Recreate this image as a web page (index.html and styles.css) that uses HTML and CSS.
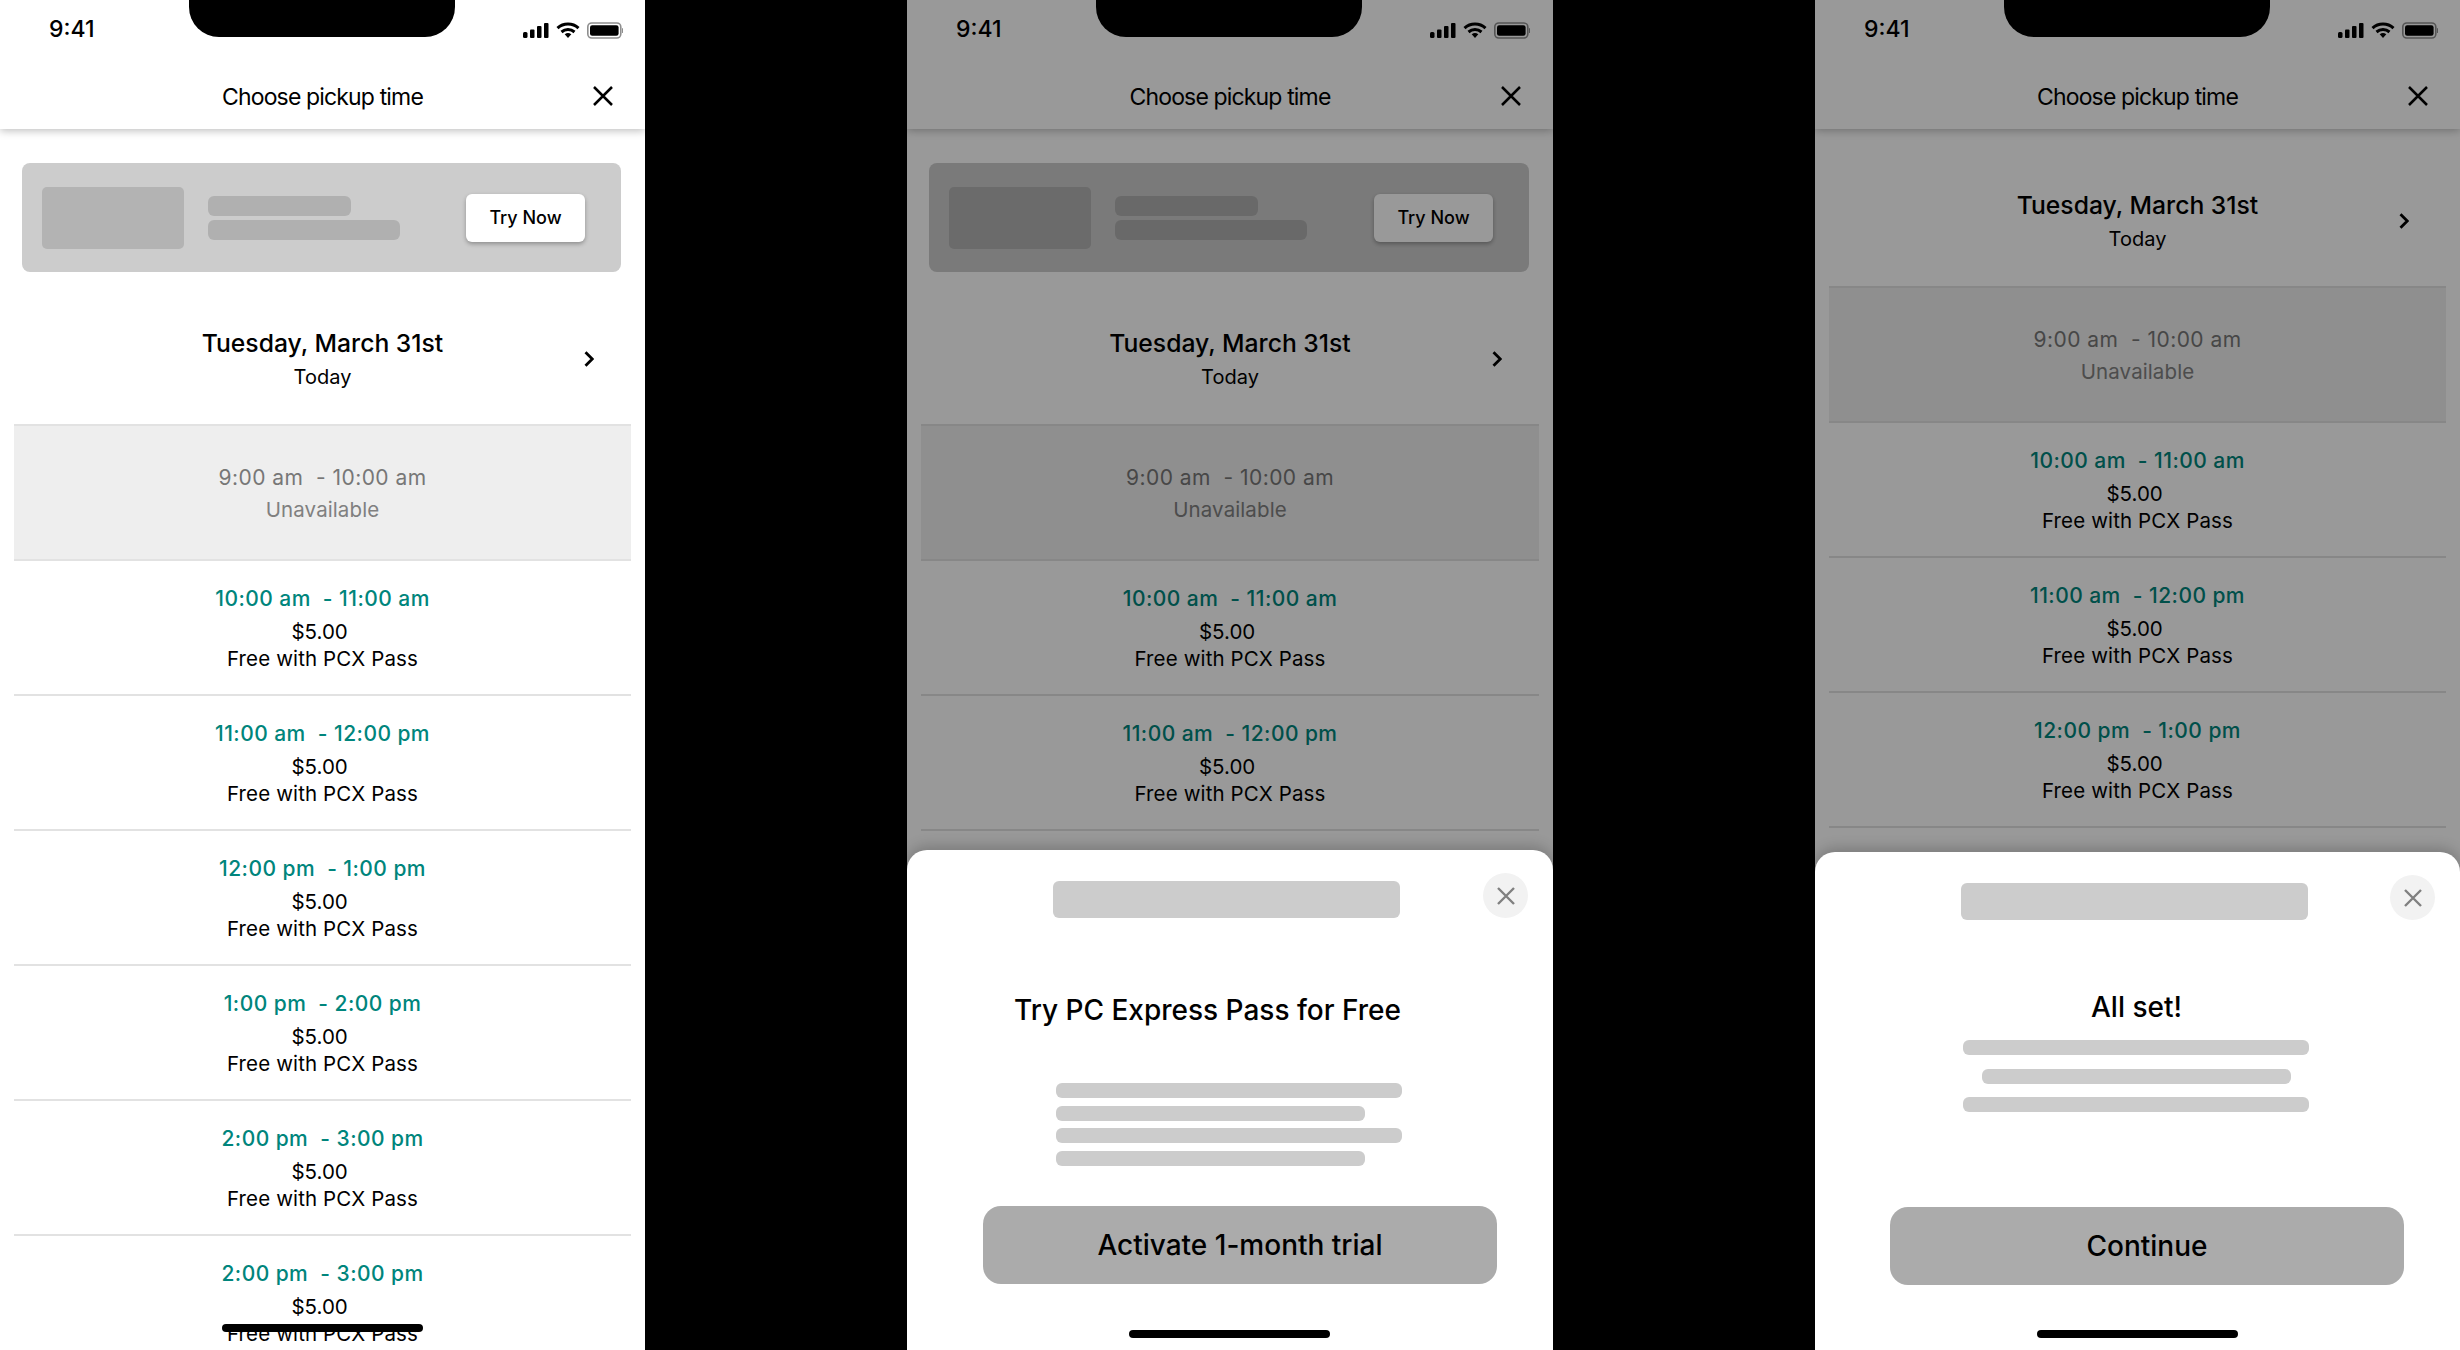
FILE: index.html
```html
<!DOCTYPE html>
<html lang="en">
<head>
    <meta charset="UTF-8">
    <title>Choose pickup time</title>
    <link rel="stylesheet" href="styles.css">
</head>
<body>
    <div class="board">

        <!-- screen 1: list with promo banner -->
        <section class="phone">
            <header class="top">
                <div class="status">
                    <span class="clock">9:41</span>
                    <span class="notch"></span>
                    <svg class="status-icons" width="100" height="17" viewBox="0 0 100 17">
                        <rect x="0" y="10" width="4.5" height="6" rx="1.5"/>
                        <rect x="7" y="7.5" width="4.5" height="8.5" rx="1"/>
                        <rect x="14" y="4" width="4.5" height="12" rx="1"/>
                        <rect x="21" y="1" width="4.5" height="15" rx="1"/>
                        <path d="M34.5 6.2a15.5 15.5 0 0 1 21 0" class="wifi"/>
                        <path d="M38.5 10a10 10 0 0 1 13 0" class="wifi"/>
                        <path d="M41.7 12.3l3.3 3.7 3.3-3.7a5.2 5.2 0 0 0-6.6 0z"/>
                        <rect x="64.8" y="1" width="33" height="15" rx="4" class="batt"/>
                        <rect x="67" y="3.2" width="28.6" height="10.6" rx="2.2"/>
                        <rect x="99" y="6" width="1" height="5" rx="0.5" class="nub"/>
                    </svg>
                </div>
                <div class="title-bar">
                    <h1 class="title">Choose pickup time</h1>
                    <svg class="title-close" width="20" height="20" viewBox="0 0 20 20"><path d="M1 1l18 18M19 1L1 19"/></svg>
                </div>
            </header>
            <div class="banner">
                <div class="banner-img"></div>
                <div class="banner-lines">
                    <div class="banner-line short"></div>
                    <div class="banner-line"></div>
                </div>
                <button class="try-btn">Try Now</button>
            </div>
            <div class="date-row">
                <span></span>
                <div class="date-text">
                    <div class="date-main">Tuesday, March 31st</div>
                    <div class="date-sub">Today</div>
                </div>
                <svg class="chevron" width="10" height="16" viewBox="0 0 10 16"><path d="M1.500 1.200L8.300 8l-6.800 6.800"/></svg>
            </div>
            <div class="slot off">
                <div class="slot-time">9:00 am  - 10:00 am</div>
                <div class="slot-note">Unavailable</div>
            </div>
            <div class="slot">
                <div class="slot-time">10:00 am  - 11:00 am</div>
                <div class="slot-price">$5.00 </div>
                <div class="slot-free">Free with PCX Pass</div>
            </div>
            <div class="slot">
                <div class="slot-time">11:00 am  - 12:00 pm</div>
                <div class="slot-price">$5.00 </div>
                <div class="slot-free">Free with PCX Pass</div>
            </div>
            <div class="slot">
                <div class="slot-time">12:00 pm  - 1:00 pm</div>
                <div class="slot-price">$5.00 </div>
                <div class="slot-free">Free with PCX Pass</div>
            </div>
            <div class="slot">
                <div class="slot-time">1:00 pm  - 2:00 pm</div>
                <div class="slot-price">$5.00 </div>
                <div class="slot-free">Free with PCX Pass</div>
            </div>
            <div class="slot">
                <div class="slot-time">2:00 pm  - 3:00 pm</div>
                <div class="slot-price">$5.00 </div>
                <div class="slot-free">Free with PCX Pass</div>
            </div>
            <div class="slot">
                <div class="slot-time">2:00 pm  - 3:00 pm</div>
                <div class="slot-price">$5.00 </div>
                <div class="slot-free">Free with PCX Pass</div>
            </div>
            <div class="home-bar list-home"></div>
        </section>

        <!-- screen 2: trial offer sheet -->
        <section class="phone">
            <header class="top">
                <div class="status">
                    <span class="clock">9:41</span>
                    <span class="notch"></span>
                    <svg class="status-icons" width="100" height="17" viewBox="0 0 100 17">
                        <rect x="0" y="10" width="4.5" height="6" rx="1.5"/>
                        <rect x="7" y="7.5" width="4.5" height="8.5" rx="1"/>
                        <rect x="14" y="4" width="4.5" height="12" rx="1"/>
                        <rect x="21" y="1" width="4.5" height="15" rx="1"/>
                        <path d="M34.5 6.2a15.5 15.5 0 0 1 21 0" class="wifi"/>
                        <path d="M38.5 10a10 10 0 0 1 13 0" class="wifi"/>
                        <path d="M41.7 12.3l3.3 3.7 3.3-3.7a5.2 5.2 0 0 0-6.6 0z"/>
                        <rect x="64.8" y="1" width="33" height="15" rx="4" class="batt"/>
                        <rect x="67" y="3.2" width="28.6" height="10.6" rx="2.2"/>
                        <rect x="99" y="6" width="1" height="5" rx="0.5" class="nub"/>
                    </svg>
                </div>
                <div class="title-bar">
                    <h1 class="title">Choose pickup time</h1>
                    <svg class="title-close" width="20" height="20" viewBox="0 0 20 20"><path d="M1 1l18 18M19 1L1 19"/></svg>
                </div>
            </header>
            <div class="banner">
                <div class="banner-img"></div>
                <div class="banner-lines">
                    <div class="banner-line short"></div>
                    <div class="banner-line"></div>
                </div>
                <button class="try-btn">Try Now</button>
            </div>
            <div class="date-row">
                <span></span>
                <div class="date-text">
                    <div class="date-main">Tuesday, March 31st</div>
                    <div class="date-sub">Today</div>
                </div>
                <svg class="chevron" width="10" height="16" viewBox="0 0 10 16"><path d="M1.500 1.200L8.300 8l-6.800 6.800"/></svg>
            </div>
            <div class="slot off">
                <div class="slot-time">9:00 am  - 10:00 am</div>
                <div class="slot-note">Unavailable</div>
            </div>
            <div class="slot">
                <div class="slot-time">10:00 am  - 11:00 am</div>
                <div class="slot-price">$5.00 </div>
                <div class="slot-free">Free with PCX Pass</div>
            </div>
            <div class="slot">
                <div class="slot-time">11:00 am  - 12:00 pm</div>
                <div class="slot-price">$5.00 </div>
                <div class="slot-free">Free with PCX Pass</div>
            </div>

            <div class="dim"></div>
            <div class="sheet offer">
                <div class="sheet-head">
                    <div class="sheet-ph"></div>
                    <div class="sheet-close"><svg width="18" height="18" viewBox="0 0 18 18"><path d="M1 1l16 16M17 1L1 17"/></svg></div>
                </div>
                <h2 class="sheet-title">Try PC Express Pass for Free</h2>
                <div class="sheet-lines">
                    <div class="sheet-line"></div>
                    <div class="sheet-line short"></div>
                    <div class="sheet-line"></div>
                    <div class="sheet-line short"></div>
                </div>
                <button class="sheet-btn">Activate 1-month trial</button>
                <div class="home-bar"></div>
            </div>
        </section>

        <!-- screen 3: confirmation sheet, no banner -->
        <section class="phone">
            <header class="top">
                <div class="status">
                    <span class="clock">9:41</span>
                    <span class="notch"></span>
                    <svg class="status-icons" width="100" height="17" viewBox="0 0 100 17">
                        <rect x="0" y="10" width="4.5" height="6" rx="1.5"/>
                        <rect x="7" y="7.5" width="4.5" height="8.5" rx="1"/>
                        <rect x="14" y="4" width="4.5" height="12" rx="1"/>
                        <rect x="21" y="1" width="4.5" height="15" rx="1"/>
                        <path d="M34.5 6.2a15.5 15.5 0 0 1 21 0" class="wifi"/>
                        <path d="M38.5 10a10 10 0 0 1 13 0" class="wifi"/>
                        <path d="M41.7 12.3l3.3 3.7 3.3-3.7a5.2 5.2 0 0 0-6.6 0z"/>
                        <rect x="64.8" y="1" width="33" height="15" rx="4" class="batt"/>
                        <rect x="67" y="3.2" width="28.6" height="10.6" rx="2.2"/>
                        <rect x="99" y="6" width="1" height="5" rx="0.5" class="nub"/>
                    </svg>
                </div>
                <div class="title-bar">
                    <h1 class="title">Choose pickup time</h1>
                    <svg class="title-close" width="20" height="20" viewBox="0 0 20 20"><path d="M1 1l18 18M19 1L1 19"/></svg>
                </div>
            </header>
            <div class="date-row plain">
                <span></span>
                <div class="date-text">
                    <div class="date-main">Tuesday, March 31st</div>
                    <div class="date-sub">Today</div>
                </div>
                <svg class="chevron" width="10" height="16" viewBox="0 0 10 16"><path d="M1.500 1.200L8.300 8l-6.800 6.800"/></svg>
            </div>
            <div class="slot off">
                <div class="slot-time">9:00 am  - 10:00 am</div>
                <div class="slot-note">Unavailable</div>
            </div>
            <div class="slot">
                <div class="slot-time">10:00 am  - 11:00 am</div>
                <div class="slot-price">$5.00 </div>
                <div class="slot-free">Free with PCX Pass</div>
            </div>
            <div class="slot">
                <div class="slot-time">11:00 am  - 12:00 pm</div>
                <div class="slot-price">$5.00 </div>
                <div class="slot-free">Free with PCX Pass</div>
            </div>
            <div class="slot">
                <div class="slot-time">12:00 pm  - 1:00 pm</div>
                <div class="slot-price">$5.00 </div>
                <div class="slot-free">Free with PCX Pass</div>
            </div>

            <div class="dim"></div>
            <div class="sheet done">
                <div class="sheet-head">
                    <div class="sheet-ph"></div>
                    <div class="sheet-close"><svg width="18" height="18" viewBox="0 0 18 18"><path d="M1 1l16 16M17 1L1 17"/></svg></div>
                </div>
                <h2 class="sheet-title">All set!</h2>
                <div class="sheet-lines">
                    <div class="sheet-line"></div>
                    <div class="sheet-line short"></div>
                    <div class="sheet-line"></div>
                </div>
                <button class="sheet-btn">Continue</button>
                <div class="home-bar"></div>
            </div>
        </section>

    </div>
</body>
</html>
```

FILE: styles.css
```css
* {
    box-sizing: border-box;
}
body {
    margin: 0;
    background-color: #000;
    font-family: Inter, "Liberation Sans", sans-serif;
    color: #000;
}
.board {
    display: grid;
    grid-template-columns: 645px 646px 645px;
    column-gap: 262px;
    height: 1350px;
    overflow: hidden;
}
.phone {
    position: relative;
    height: 1350px;
    overflow: hidden;
    background-color: #fff;
}

/* status bar and title */
.top {
    height: 129px;
    background-color: #fff;
    box-shadow: 0 2px 8px rgba(0, 0, 0, 0.25);
}
.status {
    display: flex;
    align-items: flex-start;
    height: 65px;
    padding: 0 22px 0 49px;
}
.clock {
    width: 140px;
    margin-top: 16px;
    font-size: 23px;
    line-height: 26px;
    font-weight: 500;
}
.notch {
    width: 266px;
    height: 37px;
    background-color: #000;
    border-radius: 0 0 30px 30px;
}
.status-icons {
    margin: 22px 0 0 68px;
    flex: none;
}
.wifi {
    fill: none;
    stroke: #000;
    stroke-width: 3;
}
.batt {
    fill: none;
    stroke: #8e8e8e;
    stroke-width: 1.600;
}
.nub {
    fill: #8e8e8e;
}
.title-bar {
    display: grid;
    grid-template-columns: 1fr auto 1fr;
    align-items: center;
    height: 64px;
}
.title {
    grid-column: 2;
    margin: 0;
    font-size: 23px;
    font-weight: 400;
    letter-spacing: -0.85px;
}
.title-close {
    justify-self: end;
    margin: 0 32px 2px 0;
    fill: none;
    stroke: #000;
    stroke-width: 2.500;
}

/* promo banner */
.banner {
    display: flex;
    align-items: center;
    height: 109px;
    margin: 34px 24px 0 22px;
    padding: 0 36px 0 20px;
    background-color: #ccc;
    border-radius: 8px;
}
.banner-img {
    width: 142px;
    height: 62px;
    background-color: #b3b3b3;
    border-radius: 5px;
}
.banner-lines {
    display: flex;
    flex-direction: column;
    gap: 4px;
    width: 192px;
    margin-left: 24px;
}
.banner-line {
    height: 20px;
    background-color: #b0b0b0;
    border-radius: 6px;
}
.banner-line.short {
    width: 143px;
}
.try-btn {
    width: 119px;
    height: 48px;
    margin-left: auto;
    background-color: #fff;
    border: none;
    border-radius: 6px;
    box-shadow: 0 2px 4px rgba(0, 0, 0, 0.3);
    font-family: inherit;
    font-size: 18px;
    font-weight: 500;
    color: #000;
}

/* date picker row */
.date-row {
    display: grid;
    grid-template-columns: 1fr auto 1fr;
    align-items: center;
    height: 152px;
    padding-top: 24px;
    text-align: center;
}
.date-row.plain {
    height: 157px;
    padding-top: 28px;
}
.date-text {
    grid-column: 2;
}
.date-main {
    font-size: 24.700px;
    line-height: 30px;
    font-weight: 500;
}
.date-sub {
    margin-top: 4px;
    font-size: 20px;
    line-height: 30px;
}
.chevron {
    justify-self: end;
    margin: 0 51px 2px 0;
    fill: none;
    stroke: #000;
    stroke-width: 2.800;
}

/* time slots */
.slot {
    height: 135px;
    margin: 0 14px;
    padding-top: 24px;
    border-bottom: 2px solid #e2e2e2;
    text-align: center;
}
.slot.off {
    height: 137px;
    padding-top: 38px;
    background-color: #eee;
    border-top: 2px solid #e2e2e2;
}
.slot-time {
    font-size: 21px;
    line-height: 28px;
    font-weight: 500;
    letter-spacing: 0.45px;
    color: #00857c;
    white-space: pre;
}
.slot.off .slot-time {
    font-weight: 400;
    color: #777;
}
.slot-note {
    margin-top: 4px;
    font-size: 20.500px;
    line-height: 28px;
    letter-spacing: 0.1px;
    color: #808080;
}
.slot-price {
    margin-top: 5px;
    font-size: 20.500px;
    line-height: 27px;
    white-space: pre;
}
.slot-free {
    font-size: 20.500px;
    line-height: 27px;
    letter-spacing: 0.12px;
}

/* modal sheets */
.dim {
    position: absolute;
    inset: 0;
    z-index: 1;
    background-color: rgba(0, 0, 0, 0.4);
}
.sheet {
    position: absolute;
    left: 0;
    right: 0;
    bottom: 0;
    z-index: 2;
    display: flex;
    flex-direction: column;
    background-color: #fff;
    border-radius: 20px 20px 0 0;
    box-shadow: 0 -4px 14px rgba(0, 0, 0, 0.2);
}
.sheet.offer {
    height: 500px;
}
.sheet.done {
    height: 498px;
}
.sheet-head {
    display: flex;
    align-items: flex-end;
    padding: 23px 25px 0 146px;
}
.sheet-ph {
    width: 347px;
    height: 37px;
    background-color: #ccc;
    border-radius: 6px;
}
.sheet-close {
    display: flex;
    align-items: center;
    justify-content: center;
    width: 45px;
    height: 45px;
    margin-left: auto;
    background-color: #f2f2f2;
    border-radius: 50%;
}
.sheet-close svg {
    fill: none;
    stroke: #808080;
    stroke-width: 2.400;
}
.sheet-title {
    margin: 72px 0 0;
    padding-right: 45px;
    font-size: 28px;
    line-height: 40px;
    font-weight: 500;
    text-align: center;
}
.done .sheet-title {
    margin-top: 67px;
    padding-right: 2px;
}
.sheet-lines {
    display: flex;
    flex-direction: column;
    gap: 7.700px;
    width: 346px;
    margin: 53px 0 0 149px;
}
.done .sheet-lines {
    align-items: center;
    gap: 13.500px;
    margin: 13px 0 0 148px;
}
.sheet-line {
    width: 100%;
    height: 15px;
    background-color: #ccc;
    border-radius: 6px;
}
.sheet-line.short {
    width: 309px;
}
.sheet-btn {
    width: 514px;
    height: 78px;
    margin: auto 0 66px 76px;
    background-color: #ababab;
    border: none;
    border-radius: 18px;
    font-family: inherit;
    font-size: 28px;
    font-weight: 500;
    color: #000;
}
.done .sheet-btn {
    margin: auto 0 65px 75px;
}

/* home indicator */
.home-bar {
    position: absolute;
    left: 222px;
    bottom: 12px;
    z-index: 3;
    width: 201px;
    height: 8px;
    background-color: #000;
    border-radius: 4px;
}
.home-bar.list-home {
    bottom: 18px;
}
```
